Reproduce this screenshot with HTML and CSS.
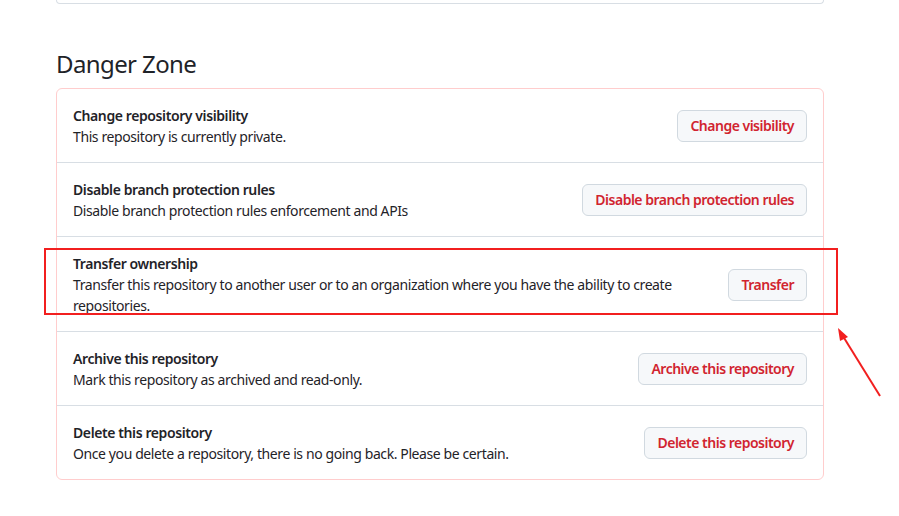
FILE: index.html
```html
<!DOCTYPE html>
<html lang="en">
<head>
    <meta charset="UTF-8">
    <title>Danger Zone</title>
    <link rel="stylesheet" href="styles.css">
</head>
<body>
    <div class="page">
        <div class="prev_box"></div>
        <h2 class="subhead">Danger Zone</h2>
        <div class="danger_box">
            <div class="row">
                <div class="info">
                    <strong>Change repository visibility</strong>
                    <p>This repository is currently private.</p>
                </div>
                <button class="btn_danger">Change visibility</button>
            </div>
            <div class="row">
                <div class="info">
                    <strong>Disable branch protection rules</strong>
                    <p>Disable branch protection rules enforcement and APIs</p>
                </div>
                <button class="btn_danger">Disable branch protection rules</button>
            </div>
            <div class="row marked">
                <div class="info">
                    <strong>Transfer ownership</strong>
                    <p>Transfer this repository to another user or to an organization where you have the ability to create repositories.</p>
                </div>
                <button class="btn_danger">Transfer</button>
                <div class="highlight"></div>
            </div>
            <div class="row">
                <div class="info">
                    <strong>Archive this repository</strong>
                    <p>Mark this repository as archived and read-only.</p>
                </div>
                <button class="btn_danger">Archive this repository</button>
            </div>
            <div class="row">
                <div class="info">
                    <strong>Delete this repository</strong>
                    <p>Once you delete a repository, there is no going back. Please be certain.</p>
                </div>
                <button class="btn_danger">Delete this repository</button>
            </div>
        </div>
    </div>
    <svg class="arrow" width="60" height="80" viewBox="0 0 60 80">
        <line x1="44" y1="68" x2="5" y2="5" stroke="#f21f1f" stroke-width="2"/>
        <polygon points="2,0 4,13 12,9" fill="#f21f1f"/>
    </svg>
</body>
</html>
```

FILE: styles.css
```css
body{
    margin: 0;
    background: #fff;
    font-family: "Noto Sans", "Liberation Sans", sans-serif;
    color: #1f2328;
    font-size: 14px;
    line-height: 21px;
    letter-spacing: -0.4px;
}
.page{
    width: 768px;
    margin-left: 56px;
}
.prev_box{
    height: 3px;
    border: 1px solid #d8dee4;
    border-top: none;
    border-radius: 0 0 6px 6px;
}
.subhead{
    margin: 42px 0 6px 0;
    font-size: 24px;
    font-weight: 400;
    line-height: 36px;
    letter-spacing: -0.6px;
}
.danger_box{
    border: 1px solid #ffcdcd;
    border-radius: 6px;
}
.row{
    position: relative;
    display: flex;
    align-items: center;
    gap: 16px;
    padding: 16px 16px 15px 16px;
    border-top: 1px solid #d8dee4;
}
.row:first-child{
    border-top: none;
}
.info{
    flex: 1;
}
.info strong{
    display: block;
    font-weight: 600;
}
.info p{
    margin: 0;
}
.btn_danger{
    flex-shrink: 0;
    padding: 5px 12px;
    font-family: inherit;
    font-size: 14px;
    font-weight: 600;
    line-height: 20px;
    letter-spacing: -0.5px;
    color: #d1242f;
    background: #f6f8fa;
    border: 1px solid #d1d9e0;
    border-radius: 6px;
}
.highlight{
    position: absolute;
    left: -13px;
    right: -15px;
    top: 11px;
    bottom: 16px;
    border: 2px solid #f21f1f;
}
.arrow{
    position: absolute;
    left: 836px;
    top: 328px;
}
```
